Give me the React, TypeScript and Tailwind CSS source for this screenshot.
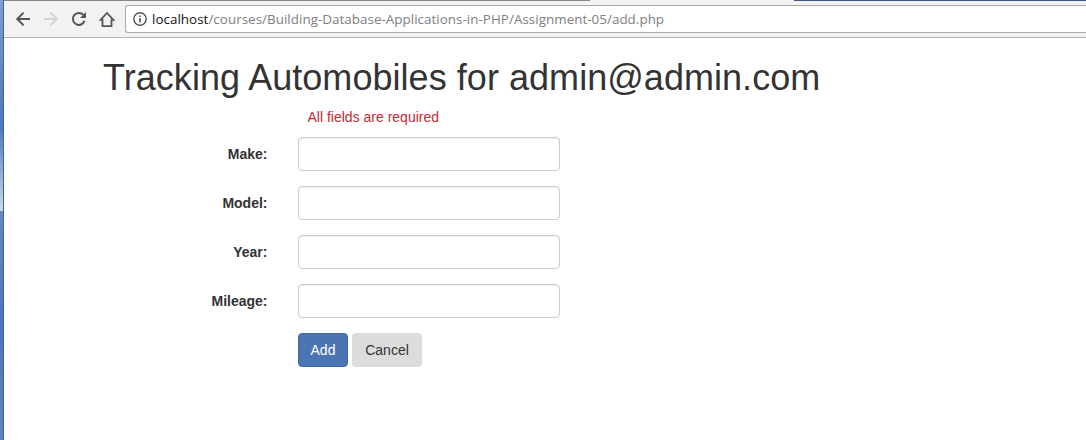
import React from "react";

function BackIcon() {
  return (
    <svg width="16" height="16" viewBox="0 0 16 16" fill="none" stroke="currentColor" strokeWidth="2">
      <path d="M15 8H2.6M8.6 1.6L2.3 8L8.6 14.4" />
    </svg>
  );
}

function ReloadIcon() {
  return (
    <svg width="16" height="16" viewBox="0 0 16 16">
      <path d="M13.6 9.8A6 6 0 1 1 12.4 3.9" fill="none" stroke="currentColor" strokeWidth="2" />
      <path d="M15 1V7H9Z" fill="currentColor" />
    </svg>
  );
}

function HomeIcon() {
  return (
    <svg width="18" height="18" viewBox="0 0 18 18" fill="none" stroke="currentColor" strokeWidth="1.8">
      <path d="M2.6 9.9H4.5V16.1H13.5V9.9H15.4L9 3Z" />
    </svg>
  );
}

function InfoIcon() {
  return (
    <svg width="14" height="14" viewBox="0 0 14 14" fill="none" stroke="currentColor">
      <circle cx="7" cy="7" r="6.2" strokeWidth="1.4" />
      <path d="M7 6V10.4M7 3.4V5" strokeWidth="1.6" />
    </svg>
  );
}

function Toolbar() {
  return (
    <header className="flex h-[38px] shrink-0 flex-col border-b border-[#b2b2b2] bg-[#f2f2f2]">
      <div className="flex h-px shrink-0">
        <div className="w-[586px] bg-[#85858f]" />
        <div className="w-[204px]" />
        <div className="flex-1 bg-[#40547c]" />
      </div>
      <div className="flex flex-1 items-start pl-[11px] pt-1 text-[#555]">
        <div className="flex h-7 w-[110px] items-center">
          <BackIcon />
          <div className="ml-3 -scale-x-100 text-[#d2d2d2]"><BackIcon /></div>
          <div className="ml-3"><ReloadIcon /></div>
          <div className="ml-[11px]"><HomeIcon /></div>
        </div>
        <div className="flex h-7 flex-1 items-center rounded-l-[3px] border border-r-0 border-[#aaa] bg-white pl-[7px]">
          <InfoIcon />
          <span className="ml-[5px] whitespace-nowrap pt-0.5 font-['Open_Sans',sans-serif] text-[13.4px] leading-none tracking-[0.035px] text-[#808080]">
            <span className="text-[#111]">localhost</span>/courses/Building-Database-Applications-in-PHP/Assignment-05/add.php
          </span>
        </div>
      </div>
    </header>
  );
}

const fields = ["Make", "Model", "Year", "Mileage"];

export default function App() {
  return (
    <div className="flex h-[440px] w-full overflow-hidden bg-white font-['Liberation_Sans',Arial,sans-serif] text-sm leading-5 text-[#333]">
      <div className="flex w-1 shrink-0 flex-col border-r border-[#46618c]">
        <div className="h-[211px] bg-linear-to-b from-[#7c9fce] via-[#4c79b9] via-60% to-[#c9dced]" />
        <div className="flex-1 bg-linear-to-b from-[#6389c3] via-[#4b76b6] to-[#6085bf]" />
      </div>
      <div className="flex min-w-0 flex-1 flex-col">
        <Toolbar />
        <main className="pl-[99px] pt-5">
          <h1 className="whitespace-nowrap text-[36px] leading-10 tracking-[0.045px]">Tracking Automobiles for admin@admin.com</h1>
          <p className="ml-[204.5px] mt-[9px] text-[#c52a35]">All fields are required</p>
          <form className="mt-[10px] flex flex-col gap-[15px]" onSubmit={(e) => e.preventDefault()}>
            {fields.map((name) => (
              <div key={name} className="flex items-center">
                <label htmlFor={name} className="w-[164.5px] text-right font-bold">{name}:</label>
                <input
                  id={name}
                  type="text"
                  className="ml-[30.5px] h-[34px] w-[262px] rounded border border-[#ccc] bg-white px-3 shadow-[inset_0_1px_1px_rgba(0,0,0,0.075)]"
                />
              </div>
            ))}
            <div className="ml-[195px] flex gap-1">
              <button type="submit" className="h-[34px] w-[50px] rounded border border-[#4169a6] bg-[#4b74b3] text-white">Add</button>
              <button type="button" className="h-[34px] w-[70px] rounded bg-[#dcdcdc]">Cancel</button>
            </div>
          </form>
        </main>
      </div>
    </div>
  );
}
